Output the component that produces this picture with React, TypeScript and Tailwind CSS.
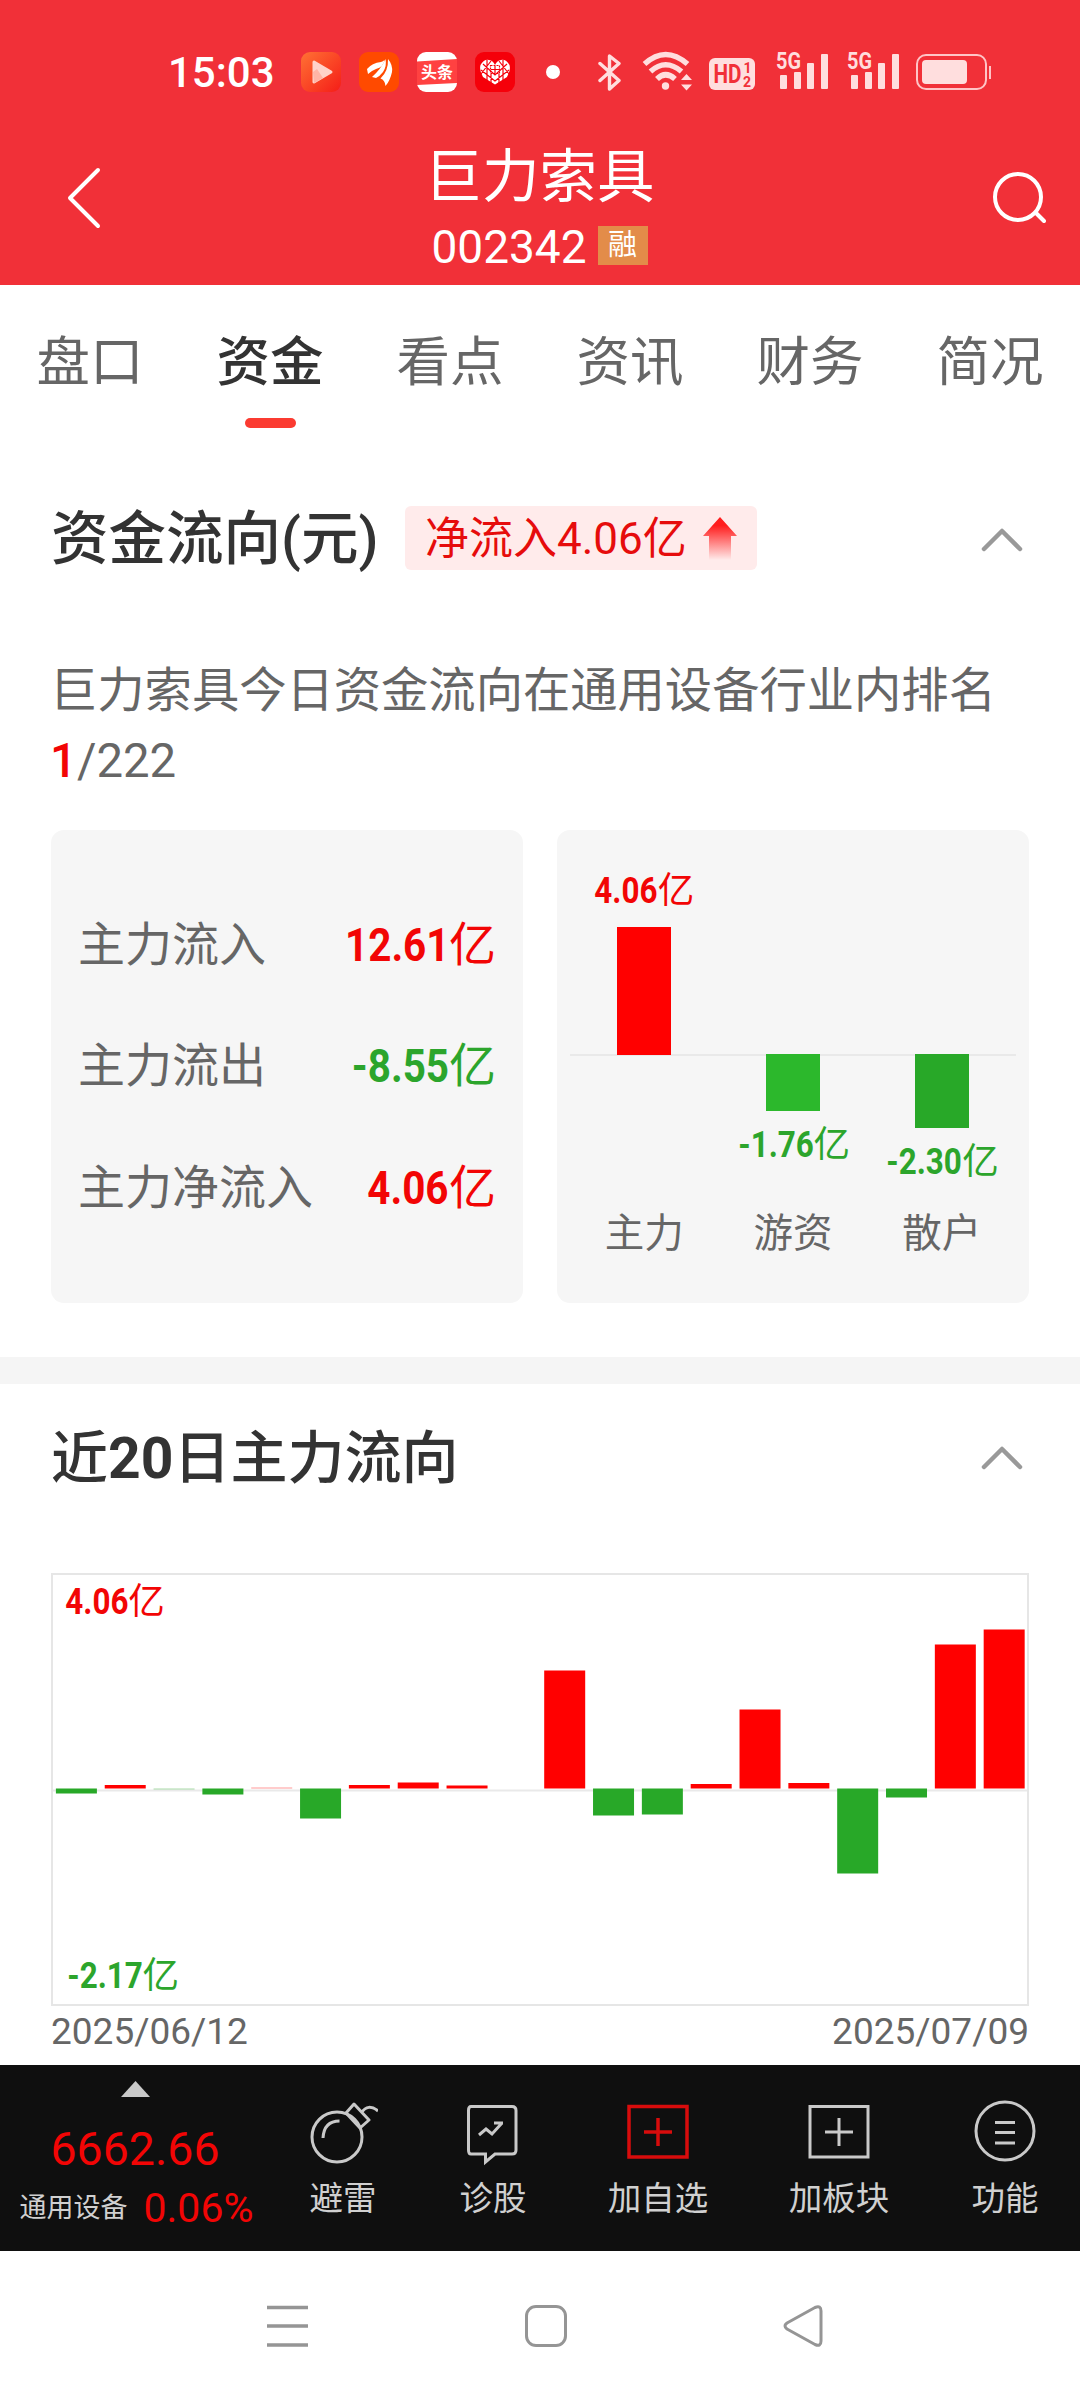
import type { ReactNode } from "react";
import clsx from "clsx";

const TABS = ["盘口", "资金", "看点", "资讯", "财务", "简况"];

const MAIN_FLOWS = [
  { label: "主力流入", value: "12.61", up: true },
  { label: "主力流出", value: "-8.55", up: false },
  { label: "主力净流入", value: "4.06", up: true },
];

const PARTIES = [
  { name: "主力", value: "4.06", height: 128, up: true, bar: "bg-[#ff0000]" },
  { name: "游资", value: "-1.76", height: 56, up: false, bar: "bg-[#2cb82c]" },
  { name: "散户", value: "-2.30", height: 73, up: false, bar: "bg-[#28a828]" },
];

// daily main-force flow, in chart pixels
const DAILY = [-5, 3.5, -1, -6, 1, -30, 3.5, 6, 3, 0, 118, -27, -26, 4.5, 79, 5.5, -85, -9, 144, 159];

function Amount({ value, up, className }: { value: string; up: boolean; className?: string }) {
  return (
    <span className={clsx("flex items-center whitespace-nowrap", up ? "text-[#f20505]" : "text-[#2ca52c]", className)}>
      {/* condensed digits, the margin takes back the width lost to the scale */}
      <span className="-ml-[0.28em] inline-block origin-right scale-x-[0.86] font-bold">{value}</span>
      <span>亿</span>
    </span>
  );
}

function Collapse() {
  return (
    <svg width="42" height="24" viewBox="0 0 42 24" fill="none" stroke="#999" strokeWidth="4.5" strokeLinecap="round" strokeLinejoin="round">
      <path d="M3 21 L21 3 L39 21" />
    </svg>
  );
}

function Signal() {
  return (
    <svg className="overflow-visible" width="53" height="40" viewBox="0 0 53 40" fill="#ffdede">
      <text x="0" y="17" fontSize="24" fontWeight="700" textLength="25" lengthAdjust="spacingAndGlyphs" fontFamily="Roboto, sans-serif">5G</text>
      <rect x="4" y="23" width="7" height="14" rx="1" />
      <rect x="18" y="20" width="7" height="17" rx="1" />
      <rect x="31" y="11" width="7" height="26" rx="1" />
      <rect x="45" y="2" width="7" height="35" rx="1" />
    </svg>
  );
}

function StatusBar() {
  return (
    <div className="flex h-[144px] items-center pl-[168px]">
      <span className="w-[133px] pt-[2px] text-[42px] font-medium leading-none">15:03</span>

      {/* notification icons */}
      <div className="flex gap-[18px]">
        <svg width="40" height="40" viewBox="0 0 40 40">
          <defs>
            <linearGradient id="play" x1="0" y1="0" x2="1" y2="1">
              <stop offset="0" stopColor="#ff7134" />
              <stop offset="1" stopColor="#f51d18" />
            </linearGradient>
          </defs>
          <rect width="40" height="40" rx="9" fill="url(#play)" />
          <path d="M13 10 L30 20 L13 30 Z" fill="#ffd3ca" stroke="#ffd3ca" strokeWidth="3" strokeLinejoin="round" />
          <path d="M12 20 L16 17 L22 26 L13 31 Z" fill="#ffb4a6" />
        </svg>
        <svg width="40" height="40" viewBox="0 0 40 40">
          <rect width="40" height="40" rx="9" fill="#ff4a00" />
          <g fill="#fff">
            <path d="M8 17 Q13 11 22 10 Q24 9.500 25.500 8 Q24.500 15 17 17 Q12 19 9 22 Z" />
            <path d="M13 25 Q22 17 26.500 7 Q28 14 24 20 Q21 24 17 26 Z" />
            <path d="M29 7 Q34 13 33 20 Q31 29 26.500 34 Q26 28 21.500 26.500 Q29.500 19 29 7 Z" />
          </g>
        </svg>
        <svg width="40" height="40" viewBox="0 0 40 40">
          <rect width="40" height="40" rx="9" fill="#fff" />
          <path d="M0 9.500 L40 7 V31 L0 33 Z" fill="#ff4141" />
          <text x="20" y="26" fontSize="16" fontWeight="700" textAnchor="middle" fill="#fff" fontFamily="Noto Sans CJK SC, sans-serif">头条</text>
        </svg>
        <svg width="40" height="40" viewBox="0 0 40 40">
          <rect width="40" height="40" rx="9" fill="#f5000a" />
          <path d="M20 32.500 L8 25 Q4 18 5.500 13 Q9 7 14 8 Q18 8.500 20 13 Q22 8.500 26 8 Q31 7 34.500 13 Q36 18 32 25 Z" fill="#fff" />
          <g fill="none" stroke="#f5000a" strokeWidth="1.200">
            <path d="M6 18 L20 29 L34 18 M8 12 L20 23 L32 12 M12 8 V30 M28 8 V30 M16 9 L6 22 M24 9 L34 22 M16 22 V31 M24 22 V31" />
            <rect x="15.500" y="13.500" width="9" height="8" strokeDasharray="2 1" />
            <path d="M20 14 V21 M16 17.500 H24" />
          </g>
        </svg>
      </div>
      <span className="ml-[31px] size-[14px] rounded-full bg-white" />

      {/* radios */}
      <svg className="ml-[38px]" width="24" height="40" viewBox="0 0 24 40" fill="none" stroke="#ffdede" strokeWidth="3.4" strokeLinejoin="round" strokeLinecap="round">
        <path d="M2 11.500 L21 28.500 L11.500 37 V4 L21 11.500 L2 28.500" />
      </svg>
      <svg className="ml-[21px] overflow-visible" width="50" height="40" viewBox="0 0 50 40">
        <g fill="none" stroke="#ffdede" strokeWidth="5.5">
          <path d="M1.500 12 Q22.500 -7 44.500 12" />
          <path d="M7.500 19.500 Q22.500 6 38.500 19.500" />
          <path d="M14 27 Q22.500 18.500 32 27" />
        </g>
        <circle cx="22.500" cy="34" r="3.700" fill="#ffdede" />
        <path d="M38 28 L43.500 22 L49 28 Z M38 32.500 H49 L43.500 38.500 Z" fill="#ffdede" />
      </svg>
      <svg className="ml-[16px]" width="46" height="36" viewBox="0 0 46 36">
        <rect y="4" width="46" height="32" rx="6" fill="#ffdede" />
        <g fill="#f13038" fontWeight="700" fontFamily="Roboto, sans-serif">
          <text x="4.500" y="28.500" fontSize="25" textLength="28" lengthAdjust="spacingAndGlyphs">HD</text>
          <text x="34.500" y="18.500" fontSize="14">1</text>
          <text x="34" y="32.500" fontSize="14">2</text>
        </g>
      </svg>
      <div className="ml-[21px] flex gap-[18px]">
        <Signal />
        <Signal />
      </div>
      <div className="ml-[16px] flex h-[36px] w-[71px] rounded-[10px] border-[2.500px] border-[#ffc4c6] p-[4px]">
        <div className="h-full w-[45px] rounded-[4px] bg-[#ffdede]" />
      </div>
      <span className="ml-[2px] h-[13px] w-[2px] bg-[#ffc4c6]" />
    </div>
  );
}

function Header() {
  return (
    <header className="h-[285px] bg-[#f13038] text-white">
      <StatusBar />
      <div className="flex justify-between px-[34px]">
        <svg className="mt-[23px] ml-[32px]" width="36" height="62" viewBox="0 0 36 62" fill="none" stroke="#fff" strokeWidth="4" strokeLinecap="round" strokeLinejoin="round">
          <path d="M32 3 L4 31 L32 59" />
        </svg>
        <div className="flex flex-col items-center pr-[13px] pt-[2px]">
          <h1 className="text-[57.500px] leading-[64px]">巨力索具</h1>
          <div className="mt-[9px] flex items-center gap-[11px]">
            <span className="pt-[3px] text-[46px] leading-[50px]">002342</span>
            <span className="flex h-[39px] w-[50px] items-center justify-center bg-[#e38c49] text-[29px]">融</span>
          </div>
        </div>
        <svg className="mt-[26px]" width="56" height="56" viewBox="0 0 56 56" fill="none" stroke="#fff" strokeWidth="4" strokeLinecap="round">
          <circle cx="28" cy="27" r="23" />
          <path d="M46 43 L54 51" />
        </svg>
      </div>
    </header>
  );
}

function Tabs() {
  return (
    <nav className="grid h-[155px] grid-cols-6">
      {TABS.map((tab) => {
        const active = tab === "资金";
        return (
          <div key={tab} className="flex flex-col items-center pt-[48px]">
            <span className={clsx("text-[53.500px] leading-[60px]", active ? "font-medium text-[#333]" : "text-[#666]")}>{tab}</span>
            {active && <span className="mt-[25px] h-[10px] w-[51px] rounded-[5px] bg-[#fb3b31]" />}
          </div>
        );
      })}
    </nav>
  );
}

function FundFlow() {
  return (
    <section className="h-[917px] px-[51px] pt-[66px]">
      <div className="flex h-[64px] items-center">
        <h2 className="w-[354px] whitespace-nowrap pt-[4px] text-[57.500px] font-medium leading-none text-[#333]">资金流向(元)</h2>
        <div className="flex h-[64px] w-[352px] items-center rounded-[6px] bg-[#ffebeb] pl-[20px] text-[44px] leading-none text-[#e60c0c]">
          <span className="w-[278px] whitespace-nowrap pt-[2px]">净流入4.06亿</span>
          <svg width="34" height="43" viewBox="0 0 34 43">
            <defs>
              <linearGradient id="rise" x1="0" y1="0" x2="0" y2="1">
                <stop offset="0.2" stopColor="#ff1e1e" />
                <stop offset="1" stopColor="#ff1e1e" stopOpacity="0" />
              </linearGradient>
            </defs>
            <path d="M17 0 L34 19 H28 V43 H6 V19 H0 Z" fill="url(#rise)" />
          </svg>
        </div>
        <div className="ml-auto mr-[6px] mt-[4px]">
          <Collapse />
        </div>
      </div>

      <p className="-ml-px mt-[86px] w-[960px] text-[47.300px] leading-[70px] text-[#666]">
        巨力索具今日资金流向在通用设备行业内排名
        <br />
        <span className="font-medium text-[#f20505]">1</span>/222
      </p>

      <div className="mt-[34px] grid grid-cols-2 gap-[34px]">
        <div className="flex h-[473px] flex-col rounded-[13px] bg-[#f6f6f6] px-[27px] pt-[54px]">
          {MAIN_FLOWS.map((flow) => (
            <div key={flow.label} className="flex h-[121.500px] items-center justify-between text-[47px] text-[#666]">
              <span>{flow.label}</span>
              <Amount value={flow.value} up={flow.up} />
            </div>
          ))}
        </div>

        <div className="flex h-[473px] flex-col rounded-[13px] bg-[#f6f6f6] px-[13px]">
          <div className="grid h-[374px] grid-cols-3">
            {PARTIES.map((party) => (
              <div key={party.name} className="flex flex-col items-center">
                <div className="flex h-[226px] w-full flex-col items-center justify-end border-b-2 border-[#e9e9e9]">
                  {party.up && (
                    <>
                      <Amount value={party.value} up className="mb-[13px] text-[36.500px] leading-[46px]" />
                      <div className={clsx("-mb-px w-[54px] shrink-0", party.bar)} style={{ height: party.height }} />
                    </>
                  )}
                </div>
                {!party.up && (
                  <>
                    <div className={clsx("-mt-[2px] w-[54px] shrink-0", party.bar)} style={{ height: party.height + 1 }} />
                    <Amount value={party.value} up={false} className="mt-[11px] text-[36.500px] leading-[46px]" />
                  </>
                )}
              </div>
            ))}
          </div>
          <div className="grid grid-cols-3 text-center text-[39.500px] leading-[60px] text-[#666]">
            {PARTIES.map((party) => (
              <span key={party.name}>{party.name}</span>
            ))}
          </div>
        </div>
      </div>
    </section>
  );
}

function DailyFlow() {
  return (
    <section className="h-[681px] px-[51px]">
      <div className="flex h-[146px] items-center justify-between">
        <h2 className="pt-[3px] text-[57px] font-medium leading-none text-[#333]">
          近<span className="font-bold">20</span>日主力流向
        </h2>
        <div className="mr-[6px] mt-[2px]">
          <Collapse />
        </div>
      </div>

      <div className="relative mt-[43px] h-[433px] border-2 border-[#e6e6e6]">
        <Amount value="4.06" up className="absolute left-[12px] top-[4px] text-[36.500px] leading-[46px]" />
        <Amount value="-2.17" up={false} className="absolute bottom-[5px] left-[12px] text-[36.500px] leading-[46px]" />
        <svg className="block" width="974" height="429" viewBox="0 0 974 429">
          <rect y="214.500" width="974" height="2" fill="#e9e9e9" />
          {DAILY.map((h, i) => (
            <rect
              key={i}
              x={2.9 + i * 48.83}
              y={h > 0 ? 213.5 - h : 213.5}
              width="41"
              height={Math.abs(h)}
              fill={h > 0 ? "#ff0000" : "#28a828"}
              opacity={Math.abs(h) === 1 ? 0.4 : 1}
            />
          ))}
        </svg>
      </div>
      <div className="flex justify-between pt-[4px] text-[37px] leading-[44px] text-[#666]">
        <span>2025/06/12</span>
        <span>2025/07/09</span>
      </div>
    </section>
  );
}

function Action({ label, width, children }: { label: string; width: string; children: ReactNode }) {
  return (
    <div className={clsx("flex flex-col items-center", width)}>
      <svg width="70" height="70" viewBox="0 0 70 70" fill="none" stroke="#c9c9c9" strokeWidth="3">
        {children}
      </svg>
      <span className="mt-[13px] text-[33.500px] leading-[40px] text-[#d0d0d0]">{label}</span>
    </div>
  );
}

function BottomBar() {
  return (
    <div className="flex h-[186px] bg-[#0f0f0f]">
      <div className="flex w-[270px] flex-col items-center pt-[16px]">
        <svg width="29" height="16" viewBox="0 0 29 16">
          <path d="M14.500 0 L29 16 H0 Z" fill="#c9c9c9" />
        </svg>
        <span className="mt-[25px] text-[46.500px] leading-[54px] text-[#f20505]">6662.66</span>
        <div className="mt-[6px] flex items-center gap-[16px] whitespace-nowrap pl-[3px]">
          <span className="pt-px text-[27px] leading-[50px] text-[#d0d0d0]">通用设备</span>
          <span className="text-[41px] leading-[50px] text-[#f20505]">0.06%</span>
        </div>
      </div>
      <div className="flex pt-[31px]">
        <Action label="避雷" width="w-[146px]">
          <circle cx="29" cy="41" r="25" />
          <path d="M38 17 L46 8 L61 24 L52 32 Z M53.500 16.500 Q60 7 70 15 M15 42 Q16 25 31.500 25" strokeLinejoin="round" />
        </Action>
        <Action label="诊股" width="w-[154px]">
          <path d="M13 10.500 H54 Q58 10.500 58 14.500 V54 Q58 58 54 58 H37 L27.500 66 V58 H13 Q10.500 58 10.500 54 V14.500 Q10.500 10.500 13 10.500 Z" />
          <path d="M21 39 L28 33 L34 38 L44 27 M36 27 H45" />
        </Action>
        <Action label="加自选" width="w-[176px]">
          <path d="M6 10.500 H64 V61 H6 Z M21 36 H49 M35 22 V50" stroke="#d80c0c" strokeWidth="3.500" />
        </Action>
        <Action label="加板块" width="w-[186px]">
          <path d="M6 10.500 H64 V61 H6 Z M21 36 H49 M35 22 V50" />
        </Action>
        <Action label="功能" width="w-[146px]">
          <circle cx="35" cy="35" r="29" />
          <path d="M25 26.500 H45 M25 36.500 H45 M25 47 H45" />
        </Action>
      </div>
    </div>
  );
}

function SystemNav() {
  return (
    <div className="flex h-[149px] items-center gap-[217px] pl-[267px] text-[#959595]">
      <svg width="41" height="42" viewBox="0 0 41 42" fill="none" stroke="currentColor" strokeWidth="3.500">
        <path d="M0 2.500 H41 M0 21 H41 M0 40 H41" />
      </svg>
      <span className="size-[42px] rounded-[11px] border-[3px] border-current" />
      <svg className="-ml-px" width="40" height="42" viewBox="0 0 40 42" fill="none" stroke="currentColor" strokeWidth="3" strokeLinejoin="round">
        <path d="M32 2.500 Q38 0 38 6 V36 Q38 42 32 39.500 L4 24 Q0 21 4 18 Z" />
      </svg>
    </div>
  );
}

export default function App() {
  return (
    <div className="h-[2400px] w-[1080px] overflow-hidden bg-white font-[Roboto,'Noto_Sans_CJK_SC',sans-serif]">
      <Header />
      <Tabs />
      <FundFlow />
      <div className="h-[27px] bg-[#f5f5f5]" />
      <DailyFlow />
      <BottomBar />
      <SystemNav />
    </div>
  );
}
